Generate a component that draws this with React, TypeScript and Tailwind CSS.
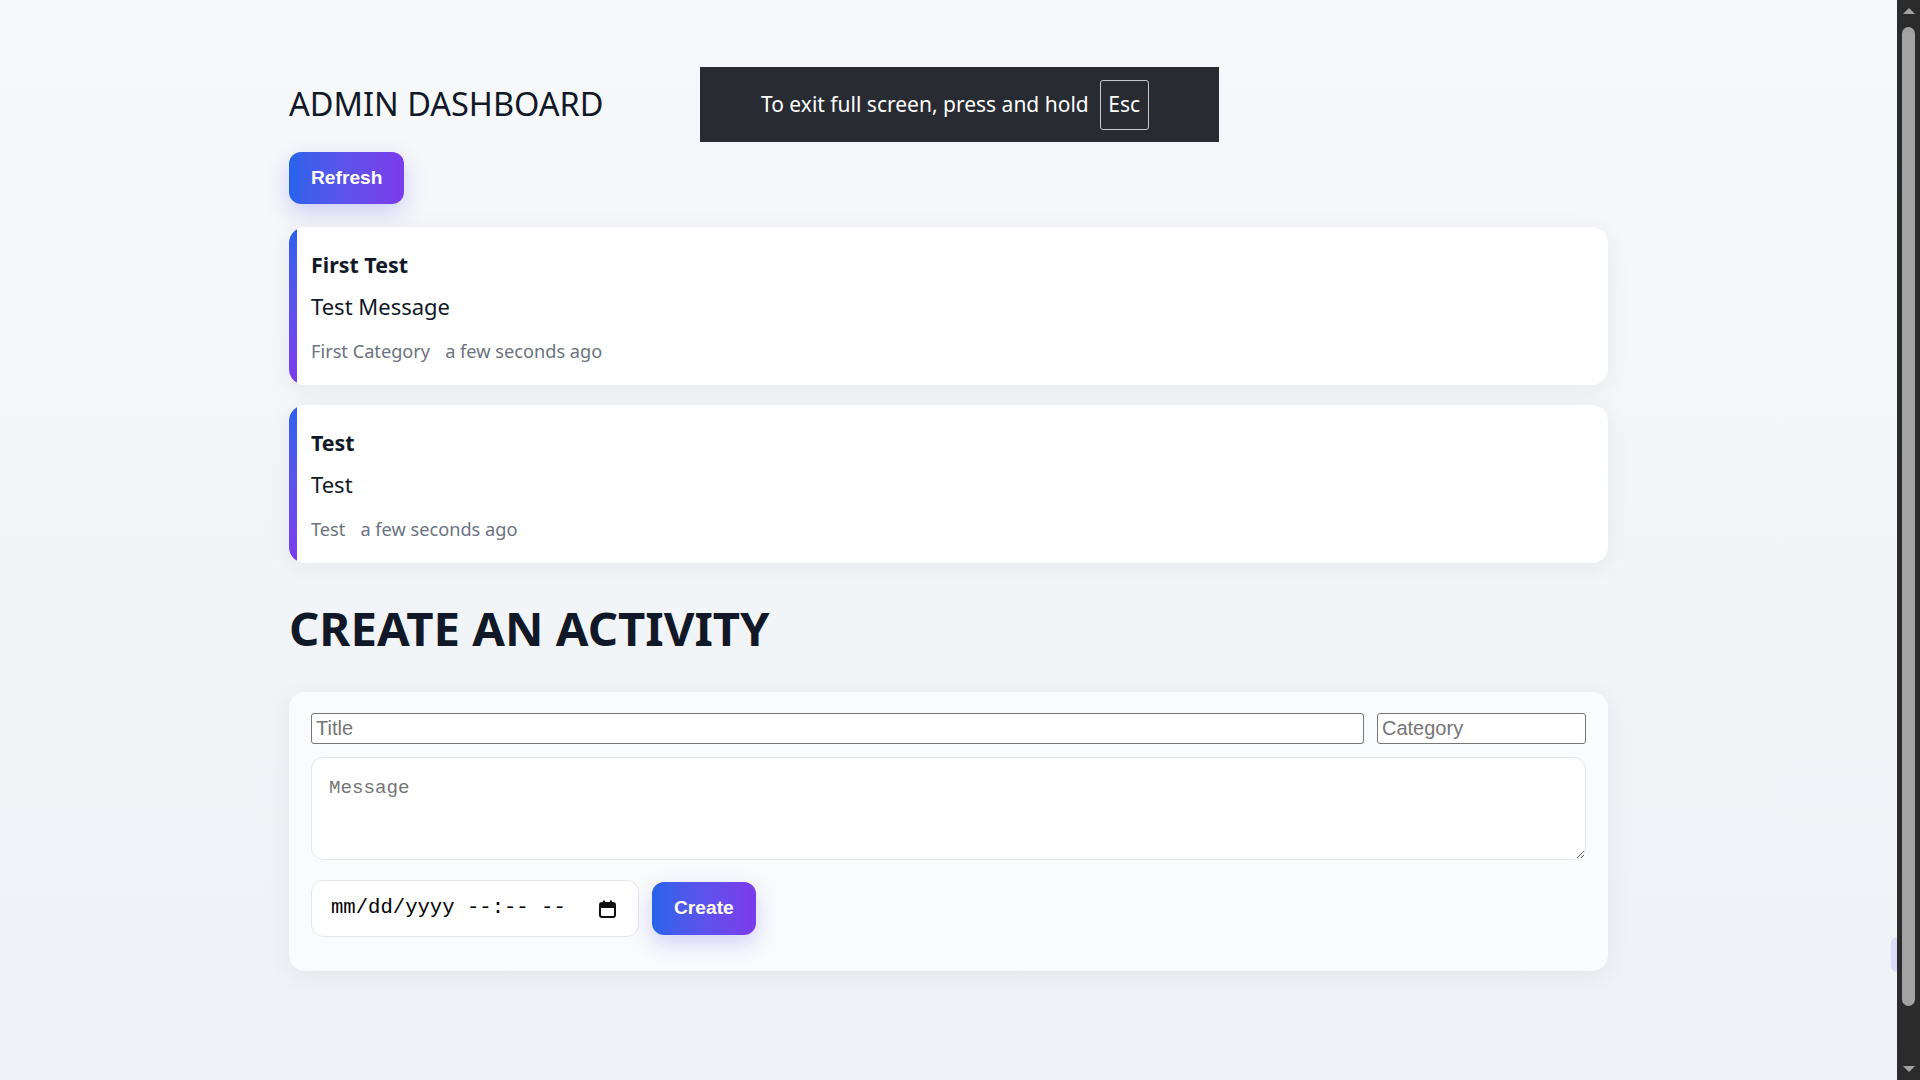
const activities = [
  { title: "First Test", message: "Test Message", category: "First Category", time: "a few seconds ago" },
  { title: "Test", message: "Test", category: "Test", time: "a few seconds ago" },
];

function CalendarIcon() {
  return (
    <svg width="17" height="18" viewBox="0 0 17 18" fill="none">
      <rect x="1" y="3" width="15" height="14" rx="2" stroke="#111" strokeWidth="2" />
      <rect x="1" y="3" width="15" height="5" fill="#111" />
      <rect x="4" y="0.5" width="2" height="3" fill="#111" />
      <rect x="11" y="0.5" width="2" height="3" fill="#111" />
    </svg>
  );
}

function ActivityCard({ title, message, category, time }: { title: string; message: string; category: string; time: string }) {
  return (
    <div className="flex rounded-2xl overflow-hidden bg-white shadow-[0_4px_24px_rgba(15,23,42,0.06)]">
      <div className="w-2 bg-linear-to-b from-[#2563eb] to-[#7c3aed]" />
      <div className="flex-1 pl-[14px] pt-[23px] pb-[21px]">
        <div className="text-[21.4px] leading-[30px] font-bold text-[#111827]">{title}</div>
        <div className="mt-[11px] text-[22px] leading-[30px] text-[#111827]">{message}</div>
        <div className="mt-[17px] flex gap-[15px] text-[18.2px] leading-[26px] text-[#6b7280]">
          <span>{category}</span>
          <span>{time}</span>
        </div>
      </div>
    </div>
  );
}

export default function App() {
  return (
    <div className="flex h-screen overflow-hidden font-['Noto_Sans',sans-serif]">
      <main className="relative flex-1 bg-linear-to-b from-[#f7f8fa] to-[#eef2f6]">
        {/* browser fullscreen toast */}
        <div className="absolute left-[700px] top-[67px] w-[519px] h-[75px] bg-[#292b33] flex items-center pl-[61px] gap-[11px] text-white">
          <span className="text-[21px]">To exit full screen, press and hold</span>
          <span className="w-[49px] h-[50px] border border-[#c8c8c8] rounded-[3px] flex items-center justify-center text-[21px]">Esc</span>
        </div>
        {/* peeking floating widget */}
        <div className="absolute right-0 top-[937px] w-[6px] h-[35px] rounded-l-lg bg-[#dcdcf9]" />

        <div className="mx-auto w-[1319px] pt-[83px]">
          <h1 className="text-[32.5px] leading-[42px] text-[#111827]">ADMIN DASHBOARD</h1>
          <button className="mt-[27px] px-[22px] py-[15px] leading-[22px] rounded-xl bg-linear-to-r from-[#2563eb] to-[#7c3aed] text-white font-bold text-[19.2px] font-['Liberation_Sans',Arial,sans-serif] shadow-[0_8px_22px_rgba(99,102,241,0.28)]">
            Refresh
          </button>

          <div className="mt-[23px] flex flex-col gap-[20px]">
            {activities.map((a, i) => (
              <ActivityCard key={i} {...a} />
            ))}
          </div>

          <h1 className="mt-[37px] text-[47.3px] leading-[56px] font-bold text-[#111827]">CREATE AN ACTIVITY</h1>

          <div className="mt-[36px] rounded-2xl bg-[#fafbfc] px-[22px] pt-[21px] pb-[34px] shadow-[0_4px_24px_rgba(15,23,42,0.06)]">
            <div className="flex gap-[13px]">
              <input
                placeholder="Title"
                className="flex-1 h-[31px] px-[4px] bg-white border border-[#767676] rounded-[3px] text-[20px] font-['Liberation_Sans',Arial,sans-serif] placeholder:text-[#757575] outline-none"
              />
              <input
                placeholder="Category"
                className="w-[209px] h-[31px] px-[4px] bg-white border border-[#767676] rounded-[3px] text-[20px] font-['Liberation_Sans',Arial,sans-serif] placeholder:text-[#757575] outline-none"
              />
            </div>
            <textarea
              placeholder="Message"
              className="mt-[13px] block w-full h-[103px] px-[17px] py-[16px] bg-white border border-[#e5e7eb] rounded-xl text-[19.2px] leading-[28px] font-['Liberation_Mono',monospace] placeholder:text-[#757575] outline-none"
            />
            <div className="mt-[20px] flex items-center gap-[13px]">
              <div className="w-[328px] h-[57px] pl-[19px] pr-[22px] bg-white border border-[#e5e7eb] rounded-xl flex items-center justify-between">
                <span className="whitespace-pre text-[20.6px] text-black font-['Liberation_Mono',monospace]">mm/dd/yyyy --:-- --</span>
                <CalendarIcon />
              </div>
              <button className="h-[53px] px-[22px] rounded-xl bg-linear-to-r from-[#2563eb] to-[#7c3aed] text-white font-bold text-[19.2px] font-['Liberation_Sans',Arial,sans-serif] shadow-[0_8px_22px_rgba(99,102,241,0.28)]">
                Create
              </button>
            </div>
          </div>
        </div>
      </main>

      {/* dark scrollbar */}
      <div className="w-[23px] bg-[#2b2b2b] flex flex-col items-center">
        <div className="mt-[8px] w-0 h-0 border-l-[6px] border-r-[6px] border-b-[6px] border-l-transparent border-r-transparent border-b-[#a3a3a3]" />
        <div className="mt-[13px] w-[13px] h-[979px] rounded-full bg-[#a3a3a3]" />
        <div className="mt-auto mb-[8px] w-0 h-0 border-l-[6px] border-r-[6px] border-t-[6px] border-l-transparent border-r-transparent border-t-[#a3a3a3]" />
      </div>
    </div>
  );
}
